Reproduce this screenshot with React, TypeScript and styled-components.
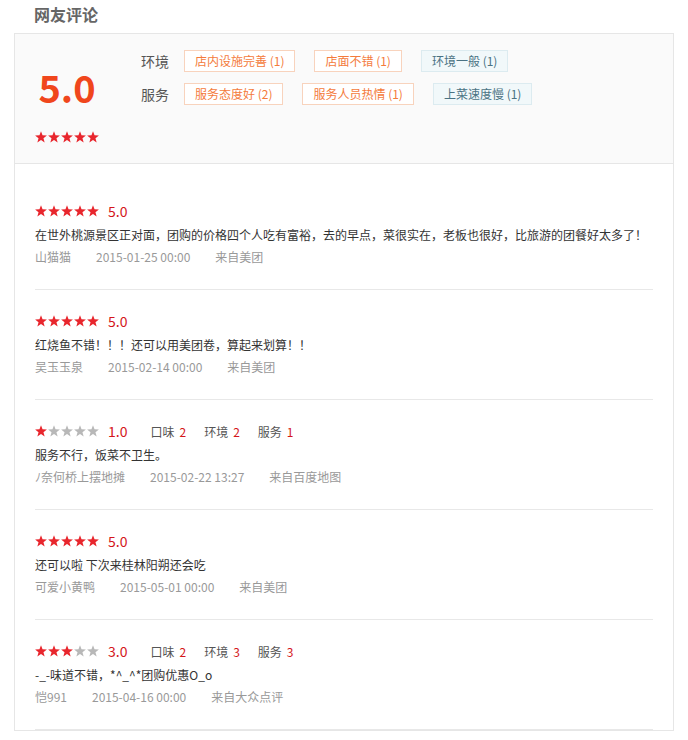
import React from "react";
import styled, { createGlobalStyle } from "styled-components";

const GlobalStyle = createGlobalStyle`
  body {
    margin: 0;
    background: #fff;
    font-family: "Noto Sans CJK SC", "Liberation Sans", sans-serif;
    color: #333;
  }
`;

const Page = styled.div`
  width: 660px;
  padding-left: 14px;
`;

const Title = styled.h2`
  margin: 0 0 5px;
  padding-left: 20px;
  font-size: 16px;
  line-height: 28px;
  font-weight: bold;
  color: #666;
`;

const Box = styled.div`
  border: 1px solid #e6e6e6;
`;

const Summary = styled.div`
  display: flex;
  height: 130px;
  padding: 16px 0 0 20px;
  box-sizing: border-box;
  background: #fafafa;
  border-bottom: 1px solid #e6e6e6;
`;

const ScoreCol = styled.div`
  width: 64px;
  display: flex;
  flex-direction: column;
  align-items: center;
`;

const BigScore = styled.div`
  margin-top: 18px;
  font-size: 38px;
  line-height: 38px;
  font-weight: bold;
  color: #f0461c;
`;

const ScoreStars = styled.div`
  margin-top: 18px;
`;

const Tags = styled.div`
  margin-left: 42px;
  display: flex;
  flex-direction: column;
  gap: 11px;
`;

const TagRow = styled.div`
  display: flex;
  align-items: center;
`;

const TagLabel = styled.span`
  width: 28px;
  margin-right: 15px;
  font-size: 14px;
  line-height: 22px;
  color: #555;
`;

const Tag = styled.span<{ $good: boolean }>`
  margin-right: 19px;
  padding: 0 10px;
  height: 22px;
  box-sizing: border-box;
  font-size: 12px;
  line-height: 20px;
  white-space: nowrap;
  border: 1px solid ${(p) => (p.$good ? "#f8d3bd" : "#dcebf0")};
  background: ${(p) => (p.$good ? "#fff" : "#f1f8fa")};
  color: ${(p) => (p.$good ? "#f47b3c" : "#4a7283")};
`;

const List = styled.div`
  padding: 16px 20px 0;
`;

const Review = styled.div`
  padding: 19px 0 22px;
  border-bottom: 1px solid #e8e8e8;
`;

const RateRow = styled.div`
  display: flex;
  align-items: center;
  height: 24px;
`;

const Rating = styled.span`
  margin-left: 9px;
  margin-right: 23px;
  font-size: 14px;
  color: #d4161b;
`;

const SubScore = styled.span`
  margin-right: 18px;
  font-size: 12px;
  color: #555;
  b {
    margin-left: 5px;
    font-weight: normal;
    color: #d4161b;
  }
`;

const Content = styled.p`
  margin: 0;
  font-size: 12px;
  line-height: 24px;
  color: #333;
`;

const Meta = styled.div`
  display: flex;
  font-size: 12px;
  line-height: 20px;
  color: #999;
  span {
    margin-right: 25px;
  }
`;

const StarWrap = styled.span`
  display: inline-flex;
  gap: 1px;
`;

const STAR = "6,0.2 7.53,4.3 11.9,4.48 8.47,7.2 9.65,11.42 6,9 2.35,11.42 3.53,7.2 0.1,4.48 4.47,4.3";

const Stars: React.FC<{ value: number }> = ({ value }) => (
  <StarWrap>
    {[0, 1, 2, 3, 4].map((i) => (
      <svg key={i} width="12" height="12" viewBox="0 0 12 12">
        <polygon points={STAR} fill={i < value ? "#e8262d" : "#b8b8b8"} />
      </svg>
    ))}
  </StarWrap>
);

type Item = {
  score: number;
  subs?: [number, number, number];
  text: string;
  name: string;
  date: string;
  from: string;
};

const reviews: Item[] = [
  {
    score: 5,
    text: "在世外桃源景区正对面，团购的价格四个人吃有富裕，去的早点，菜很实在，老板也很好，比旅游的团餐好太多了！",
    name: "山猫猫",
    date: "2015-01-25 00:00",
    from: "来自美团",
  },
  {
    score: 5,
    text: "红烧鱼不错！！！还可以用美团卷，算起来划算！！",
    name: "吴玉玉泉",
    date: "2015-02-14 00:00",
    from: "来自美团",
  },
  {
    score: 1,
    subs: [2, 2, 1],
    text: "服务不行，饭菜不卫生。",
    name: "ﾉ奈何桥上摆地摊",
    date: "2015-02-22 13:27",
    from: "来自百度地图",
  },
  {
    score: 5,
    text: "还可以啦 下次来桂林阳朔还会吃",
    name: "可爱小黄鸭",
    date: "2015-05-01 00:00",
    from: "来自美团",
  },
  {
    score: 3,
    subs: [2, 3, 3],
    text: "-_-味道不错，*^_^*团购优惠O_o",
    name: "恺991",
    date: "2015-04-16 00:00",
    from: "来自大众点评",
  },
];

const tagRows = [
  {
    label: "环境",
    tags: [
      { t: "店内设施完善 (1)", good: true },
      { t: "店面不错 (1)", good: true },
      { t: "环境一般 (1)", good: false },
    ],
  },
  {
    label: "服务",
    tags: [
      { t: "服务态度好 (2)", good: true },
      { t: "服务人员热情 (1)", good: true },
      { t: "上菜速度慢 (1)", good: false },
    ],
  },
];

const subLabels = ["口味", "环境", "服务"];

export default function App() {
  return (
    <Page>
      <GlobalStyle />
      <Title>网友评论</Title>
      <Box>
        <Summary>
          <ScoreCol>
            <BigScore>5.0</BigScore>
            <ScoreStars>
              <Stars value={5} />
            </ScoreStars>
          </ScoreCol>
          <Tags>
            {tagRows.map((row) => (
              <TagRow key={row.label}>
                <TagLabel>{row.label}</TagLabel>
                {row.tags.map((tag) => (
                  <Tag key={tag.t} $good={tag.good}>
                    {tag.t}
                  </Tag>
                ))}
              </TagRow>
            ))}
          </Tags>
        </Summary>
        <List>
          {reviews.map((r) => (
            <Review key={r.name}>
              <RateRow>
                <Stars value={r.score} />
                <Rating>{r.score.toFixed(1)}</Rating>
                {r.subs &&
                  r.subs.map((s, i) => (
                    <SubScore key={i}>
                      {subLabels[i]}
                      <b>{s}</b>
                    </SubScore>
                  ))}
              </RateRow>
              <Content>{r.text}</Content>
              <Meta>
                <span>{r.name}</span>
                <span>{r.date}</span>
                <span>{r.from}</span>
              </Meta>
            </Review>
          ))}
        </List>
      </Box>
    </Page>
  );
}
